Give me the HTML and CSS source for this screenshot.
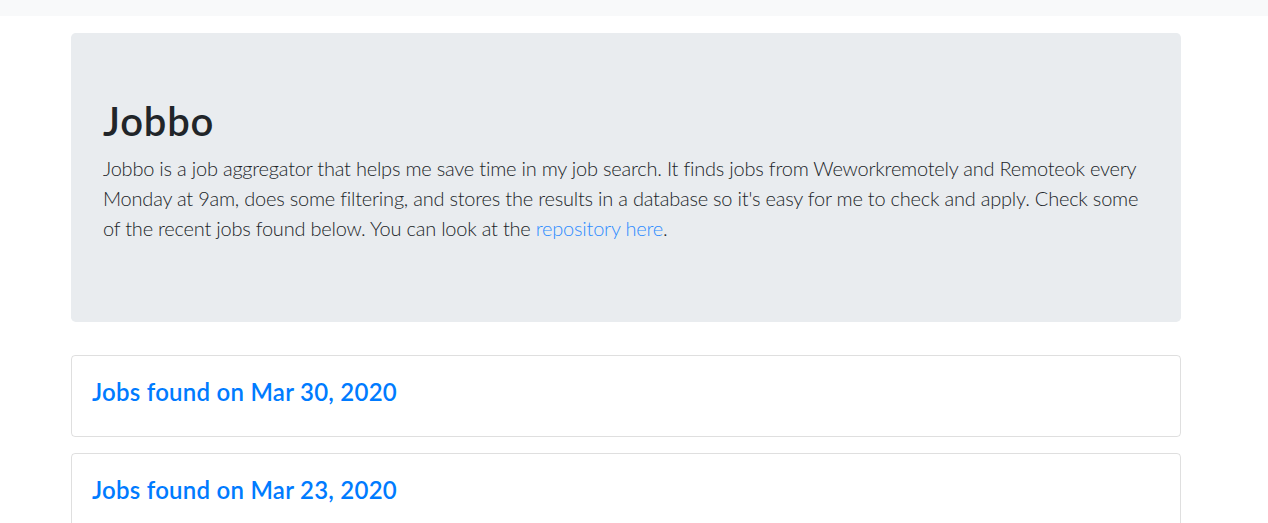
FILE: index.html
```html
<!DOCTYPE html>
<html lang="en">
<head>
<meta charset="utf-8">
<title>Jobbo</title>
<link rel="stylesheet" href="styles.css">
</head>
<body>
<div class="topbar"></div>
<main class="container">
  <section class="jumbotron">
    <h1 class="display">Jobbo</h1>
    <p class="lead">Jobbo is a job aggregator that helps me save time in my job search. It finds jobs from Weworkremotely and Remoteok every Monday at 9am, does some filtering, and stores the results in a database so it's easy for me to check and apply. Check some of the recent jobs found below. You can look at the <a href="#">repository here</a>.</p>
  </section>
  <div class="card">
    <div class="card-body">
      <h4 class="card-title"><a href="#">Jobs found on Mar 30, 2020</a></h4>
    </div>
  </div>
  <div class="card">
    <div class="card-body">
      <h4 class="card-title"><a href="#">Jobs found on Mar 23, 2020</a></h4>
    </div>
  </div>
</main>
</body>
</html>
```
FILE: styles.css
```css
* { box-sizing: border-box; }
html, body { margin: 0; padding: 0; }
body {
  font-family: Lato, "Open Sans", sans-serif;
  color: #212529;
  background: #fff;
  font-size: 16px;
  line-height: 1.5;
}
.topbar {
  height: 16px;
  background: #f8f9fa;
}
.container {
  width: 1110px;
  margin: 17px 0 0 71px;
}
.jumbotron {
  background: #e9ecef;
  border-radius: 4.8px;
  padding: 64px 32px;
  height: 289px;
  margin-bottom: 33px;
}
.display {
  margin: 0 0 8px;
  font-size: 40px;
  font-weight: 600;
  line-height: 48px;
  letter-spacing: 0.8px;
}
.lead {
  margin: 0;
  font-size: 20px;
  font-weight: 300;
  line-height: 30px;
  letter-spacing: -0.22px;
}
a { color: #007bff; text-decoration: none; }
.lead a { color: #2f8cff; }
.card {
  border: 1px solid rgba(0,0,0,.125);
  border-radius: 4px;
  margin-bottom: 16px;
  height: 82px;
}
.card-body {
  padding: 20px;
}
.card-title {
  margin: 0;
  font-size: 24px;
  font-weight: 600;
  line-height: 32px;
  letter-spacing: 0.25px;
}
```
